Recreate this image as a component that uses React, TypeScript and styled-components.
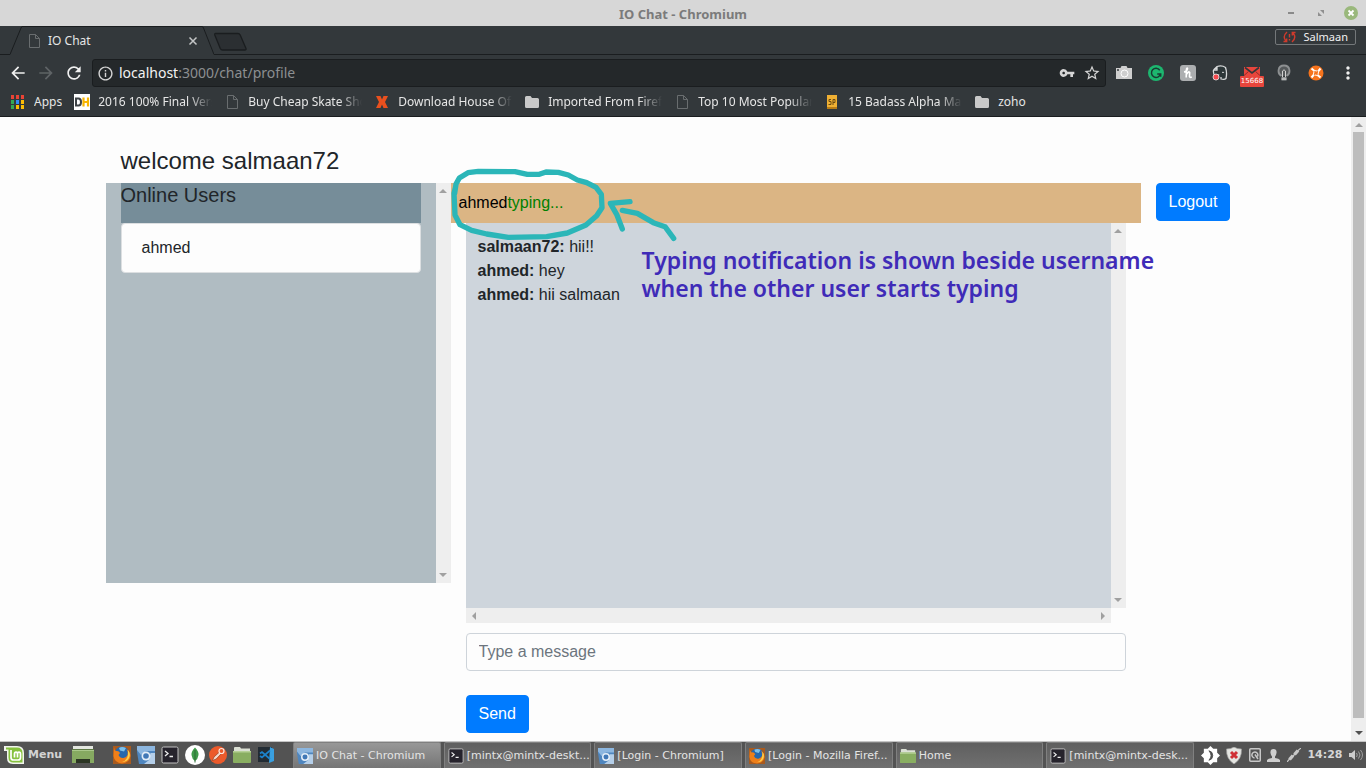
import React from "react";
import styled, { createGlobalStyle, css } from "styled-components";
import {
  MdArrowBack,
  MdArrowForward,
  MdRefresh,
  MdInfoOutline,
  MdVpnKey,
  MdStarBorder,
  MdMoreVert,
} from "react-icons/md";

const uiFont = '"Noto Sans", sans-serif';
const pageFont = '"Liberation Sans", Arial, sans-serif';
const panelFont = '"DejaVu Sans", sans-serif';

const GlobalStyle = createGlobalStyle`
  *, *::before, *::after { box-sizing: border-box; }
  body { margin: 0; background: #33383b; font-family: ${uiFont}; }
  button { border: 0; background: none; padding: 0; font: inherit; color: inherit; cursor: pointer; }
  a { color: inherit; text-decoration: none; }
  svg { display: block; flex: none; }
`;

const Desktop = styled.div`
  display: flex;
  flex-direction: column;
  min-height: 100vh;
`;

/* ---------- window title ---------- */

const TitleBar = styled.header`
  display: grid;
  grid-template-columns: 1fr auto 1fr;
  align-items: center;
  height: 26px;
  background: #d7d7d7;
`;

const WindowTitle = styled.div`
  grid-column: 2;
  padding-top: 2px;
  font-size: 13px;
  line-height: 18px;
  font-weight: 700;
  color: #7b7b7b;
`;

const WindowControls = styled.div`
  display: flex;
  justify-content: flex-end;
  gap: 16px;
  padding-right: 8px;
`;

/* ---------- tab strip ---------- */

const chromeLine = "#1a1d1f";

const TabStrip = styled.nav`
  display: flex;
  height: 29px;
  background: #33383b;
`;

const StripLead = styled.div`
  width: 10px;
  border-bottom: 1px solid ${chromeLine};
`;

const Tab = styled.div`
  display: flex;
  align-items: center;
  width: 180px;
  padding: 0 4px;
  border-top: 1px solid ${chromeLine};
  font-size: 12px;
  line-height: 16px;
  color: #e6e6e6;
`;

const TabLabel = styled.span`
  flex: 1;
  padding-left: 6px;
`;

const StripRest = styled.div`
  display: flex;
  flex: 1;
  align-items: flex-start;
  justify-content: space-between;
  border-bottom: 1px solid ${chromeLine};
  padding-right: 10px;
`;

const NewTabButton = styled.button`
  padding-top: 6px;
`;

const ProfileButton = styled.button`
  display: flex;
  align-items: center;
  gap: 8px;
  height: 16px;
  padding: 0 7px;
  margin-top: 3px;
  border: 1px solid #74787a;
  border-radius: 2px;
  font-size: 11px;
  line-height: 14px;
  color: #f2f2f2;
`;

/* ---------- toolbar ---------- */

const Toolbar = styled.div`
  display: flex;
  align-items: center;
  padding: 4px 2px 0 4px;
  background: #33383b;
`;

const NavButton = styled.button<{ $dim?: boolean }>`
  display: grid;
  place-items: center;
  width: 28px;
  height: 28px;
  color: ${(p) => (p.$dim ? "#5f6466" : "#f0f0f0")};
`;

const Omnibox = styled.div`
  display: flex;
  flex: 1;
  align-items: center;
  height: 28px;
  margin: 0 2px 0 4px;
  padding: 0 4px;
  gap: 8px;
  border: 1px solid ${chromeLine};
  border-radius: 3px;
  background: #24282a;
  color: #d5d5d5;
`;

const Address = styled.div`
  flex: 1;
  margin-left: -3px;
  font-size: 14px;
  line-height: 20px;
  color: #8c8f91;
  b {
    font-weight: 400;
    color: #f2f2f2;
  }
`;

const ExtensionButton = styled.button`
  display: grid;
  place-items: center;
  width: 32px;
  height: 28px;
  color: #f0f0f0;
  position: relative;
`;

const MailBadge = styled.span`
  position: absolute;
  left: 4px;
  top: 17px;
  width: 24px;
  height: 11px;
  border-radius: 1px;
  background: #e8453c;
  color: #fff;
  font: 7px/11px ${panelFont};
  text-align: center;
`;

/* ---------- bookmarks ---------- */

const BookmarkBar = styled.nav`
  display: flex;
  gap: 12px;
  height: 30px;
  padding: 1px 10px 0;
  border-bottom: 1px solid ${chromeLine};
  background: #33383b;
`;

const BookmarkLink = styled.a`
  display: flex;
  align-items: center;
  gap: 8px;
  font-size: 12px;
  line-height: 16px;
  color: #e6e6e6;
`;

const BookmarkText = styled.span<{ $clipped?: boolean }>`
  white-space: nowrap;
  overflow: hidden;
  ${(p) =>
    p.$clipped &&
    css`
      width: 114px;
      mask-image: linear-gradient(to right, #000 80%, transparent 100%);
    `}
`;

/* ---------- page ---------- */

const Viewport = styled.div`
  display: flex;
  flex: 1;
  background: #fdfdfd;
  font-family: ${pageFont};
  font-size: 16px;
  line-height: 24px;
  color: #212529;
`;

const Page = styled.main`
  flex: 1;
  padding: 30px 0 8px;
`;

const Container = styled.div`
  width: 100%;
  max-width: 1140px;
  margin: 0 auto;
`;

const Welcome = styled.h4`
  margin: 0 0 8px;
  padding: 0 15px;
  font-size: 24px;
  line-height: 28px;
  font-weight: 400;
`;

const Columns = styled.div`
  display: grid;
  grid-template-columns: 69fr 138fr 21fr;
  align-items: start;
`;

const UsersPanel = styled.section`
  display: flex;
  height: 400px;
  background: #b0bcc2;
`;

const UsersBody = styled.div`
  flex: 1;
  padding: 0 15px;
`;

const UsersHeading = styled.h5`
  height: 40px;
  margin: 0;
  background: #768d99;
  font-size: 20px;
  line-height: 24px;
  font-weight: 400;
`;

const UserItem = styled.button`
  display: block;
  width: 100%;
  padding: 12px 20px;
  border: 1px solid #dcdfe1;
  border-radius: 4px;
  background: #fdfdfd;
  text-align: left;
`;

const ChatColumn = styled.section`
  position: relative;
`;

const ChatHeader = styled.div`
  height: 40px;
  padding: 8px;
  background: #dbb584;
  color: #000;
`;

const Typing = styled.span`
  color: #008000;
`;

const ChatBody = styled.div`
  padding: 0 15px;
`;

const MessageArea = styled.div`
  display: grid;
  grid-template: 1fr 15px / 1fr 15px;
  height: 400px;
  margin-bottom: 10px;
`;

const Messages = styled.div`
  padding: 12px;
  background: #ced5dc;
`;

const MessageInput = styled.input`
  display: block;
  width: 100%;
  height: 38px;
  margin-bottom: 24px;
  padding: 6px 12px;
  border: 1px solid #ced4da;
  border-radius: 4px;
  background: #fdfdfd;
  font: 16px/24px ${pageFont};
  color: #495057;
  &::placeholder {
    color: #6c757d;
    opacity: 1;
  }
`;

const PrimaryButton = styled.button`
  height: 38px;
  padding: 6px 12px;
  border: 1px solid #007bff;
  border-radius: 4px;
  background: #007bff;
  color: #fff;
`;

const LogoutColumn = styled.div`
  padding: 0 15px;
`;

/* hand-drawn notes laid over the chat */

const MarkerDrawing = styled.svg`
  position: absolute;
  left: -11px;
  top: -23px;
  pointer-events: none;
`;

const Note = styled.div`
  position: absolute;
  left: 191px;
  top: 63px;
  font: 650 23px/28px ${uiFont};
  color: #3f2bb8;
  white-space: nowrap;
  pointer-events: none;
`;

/* ---------- scrollbars ---------- */

const ScrollTrack = styled.div<{ $horizontal?: boolean }>`
  display: flex;
  flex-direction: ${(p) => (p.$horizontal ? "row" : "column")};
  justify-content: space-between;
  align-items: center;
  flex: none;
  ${(p) => (p.$horizontal ? "height: 15px; padding: 0 4px;" : "width: 15px; padding: 4px 0;")}
  background: #eee;
`;

const ScrollThumb = styled.div`
  flex: 1;
  width: 11px;
  margin: 3px 0 11px;
  background: #bdbdbd;
`;

const arrowPaths = {
  up: "M0 6 4 2l4 4z",
  down: "M0 2h8L4 6z",
  left: "M6 0v8L2 4z",
  right: "M2 0v8l4-4z",
};

function Arrow({ dir, dark }: { dir: keyof typeof arrowPaths; dark?: boolean }) {
  return (
    <svg width="8" height="8" viewBox="0 0 8 8" aria-hidden="true">
      <path d={arrowPaths[dir]} fill={dark ? "#505050" : "#a0a0a0"} />
    </svg>
  );
}

/* ---------- taskbar ---------- */

const Taskbar = styled.footer`
  display: flex;
  align-items: center;
  height: 27px;
  border-top: 1px solid #c4c4c4;
  background: #535353;
  font: 11px/16px ${panelFont};
  color: #e4e4e4;
`;

const MenuButton = styled.button`
  display: flex;
  align-items: center;
  gap: 4px;
  width: 72px;
  padding-left: 4px;
  font-weight: 700;
  color: #d3d3d3;
`;

const LauncherButton = styled.button<{ $wide?: boolean }>`
  display: grid;
  place-items: center;
  width: ${(p) => (p.$wide ? 22 : 18)}px;
  height: 20px;
`;

const Launchers = styled.div`
  display: flex;
  gap: 6px;
  width: 180px;
  margin-left: 19px;
`;

const TaskList = styled.div`
  display: flex;
  flex: 1;
  gap: 3px;
  align-self: stretch;
`;

const Task = styled.button<{ $active?: boolean }>`
  display: flex;
  flex: 1 1 0;
  min-width: 0;
  align-items: center;
  gap: 3px;
  padding: 0 3px;
  border: 1px solid #808080;
  border-bottom: 0;
  border-radius: 2px 2px 0 0;
  background: ${(p) =>
    p.$active ? "linear-gradient(#989898, #757575)" : "linear-gradient(#5f5f5f, #707070)"};
  white-space: nowrap;
  svg {
    width: 16px;
    height: 16px;
  }
`;

const Tray = styled.div`
  display: flex;
  align-items: center;
  justify-content: space-between;
  width: 172px;
  padding: 0 3px 0 7px;
`;

const Clock = styled.time`
  font-weight: 700;
  color: #d6d6d6;
`;

/* ---------- icons ---------- */

function PageIcon() {
  return (
    <svg width="16" height="16" viewBox="0 0 16 16" fill="none" stroke="#696d6f">
      <path d="M3.5 1.5h6l4 4v9h-10zM9.500 1.500v4h4" />
    </svg>
  );
}

function BookmarkFolder() {
  return (
    <svg width="16" height="16" viewBox="0 0 16 16" fill="#c9c9c9">
      <path d="M1 3.500Q1 2 2.500 2H6.500L8 4h5.500Q15 4 15 5.500v7q0 1.500-1.500 1.500h-11Q1 14 1 12.500z" />
    </svg>
  );
}

function AppsIcon() {
  const colors = ["#ea4335", "#ea4335", "#ea4335", "#34a853", "#2f8af5", "#fbbc05", "#34a853", "#fbbc05", "#fbbc05"];
  return (
    <svg width="16" height="16" viewBox="0 0 16 16">
      {colors.map((c, i) => (
        <rect key={i} x={1 + (i % 3) * 5} y={1 + Math.floor(i / 3) * 5} width="3" height="4" fill={c} />
      ))}
    </svg>
  );
}

function DhIcon() {
  return (
    <svg width="16" height="16" viewBox="0 0 16 16">
      <rect width="16" height="16" fill="#fff" />
      <path d="M2 4.500h2.500q2.500 0 2.500 3.500t-2.500 3.500H2z" fill="none" stroke="#3e4347" strokeWidth="2" />
      <path d="M9.500 3.500v9M14 3.500v9M9.500 8H14" stroke="#f8b500" strokeWidth="2.200" />
    </svg>
  );
}

function XIcon() {
  return (
    <svg width="16" height="16" viewBox="0 0 16 16">
      <path d="M2 2h4.500L8 5.500 9.500 2H14l-3 6 3 6H9.500L8 10.500 6.500 14H2l3-6z" fill="#e9501e" />
    </svg>
  );
}

function SpIcon() {
  return (
    <svg width="16" height="16" viewBox="0 0 16 16">
      <path d="M3 1h10v14H3z" fill="#f0b033" />
      <path d="M3 13h10v2H3z" fill="#b97c15" />
      <path d="M7 5.500H5v2h2v3H4.500M9 11V5.500h2v3H9" fill="none" stroke="#6b4a12" />
    </svg>
  );
}

function CameraIcon() {
  return (
    <svg width="16" height="14" viewBox="0 0 16 14">
      <path d="M0 2h4.500l1-2h5l1 2H16v11H0z" fill="#cfcfcf" />
      <circle cx="8.500" cy="7.500" r="3.500" fill="none" stroke="#fff" />
      <circle cx="2" cy="4" r="1" fill="#33383b" />
    </svg>
  );
}

function GrammarIcon() {
  return (
    <svg width="16" height="16" viewBox="0 0 16 16">
      <circle cx="8" cy="8" r="8" fill="#1db66f" />
      <path d="M11.800 5.200A4.600 4.600 0 1 0 12.500 9H9.200M12.700 8.500v3.200" fill="none" stroke="#193a32" strokeWidth="1.500" />
    </svg>
  );
}

function HoneyIcon() {
  return (
    <svg width="16" height="16" viewBox="0 0 16 16">
      <rect width="16" height="16" rx="3" fill="#acaeb0" />
      <path d="M4 7q3-.5 3.500-3.500Q7 2.500 6.500 4l-.3 8.500M6.300 9.500Q9 5.500 9.700 7.500l-.2 4q.5 1.500 2.300.3" fill="none" stroke="#fff" strokeWidth="1.600" />
    </svg>
  );
}

function EvernoteIcon() {
  return (
    <svg width="16" height="16" viewBox="0 0 16 16">
      <path d="M1.500 5 5 1.500Q10 0 13.500 2.500q1.800 5 .5 11-1.500 1.500-5 .5L9 12M1.500 5Q1 9 3 10.500q3 1 4-1M1.500 5H5V1.500" fill="#2c3638" stroke="#d7d9da" strokeWidth="1.300" />
      <path d="M10 7.500q1.500-1 2 .5" stroke="#d7d9da" fill="none" />
      <circle cx="4" cy="12" r="3" fill="#f34a4f" stroke="#eee" strokeWidth=".8" />
    </svg>
  );
}

function MailIcon() {
  return (
    <svg width="16" height="16" viewBox="0 0 16 16">
      <path d="M0 2h16v11H0z" fill="#e8453c" />
      <path d="M1 2.500l7 5.500 7-5.500" fill="none" stroke="#33383b" strokeWidth="1.600" />
      <path d="M0 10.500l4.500-4M16 10.500l-4.500-4" fill="none" stroke="#8f2e2a" />
    </svg>
  );
}

function LampIcon() {
  return (
    <svg width="14" height="18" viewBox="0 0 14 18" fill="none">
      <path d="M4.500 12C0 9.500.5 1.500 7 1.500s7 8 2.500 10.500" fill="#55595b" stroke="#8d9092" strokeWidth="1.800" />
      <path d="M5.500 14V7q1.500-2.500 3 0v7" stroke="#d0d0d0" />
      <path d="M4.500 13h5v3.500h-5z" fill="#8f9294" />
      <path d="M4.500 15h5" stroke="#ddd" />
    </svg>
  );
}

function OrangeIcon() {
  return (
    <svg width="16" height="16" viewBox="0 0 16 16">
      <circle cx="8" cy="8" r="7.500" fill="#f6731c" />
      <path d="M3.500 3.500l3 2.500M12.500 3.500l-2.500 3M12.500 12.500l-3-2.500M3.500 12.500l2.500-3" stroke="#fff" strokeWidth="2" />
      <path d="M6.500 5.500l2.500.5M10.500 7l-.5 2.500M9.500 10.500l-2.500-.5M5.500 9l.5-2.500" stroke="#fff" strokeWidth="1" />
    </svg>
  );
}

function MintIcon() {
  return (
    <svg width="20" height="20" viewBox="0 0 20 20">
      <path d="M0 1h13q7 0 7 7v11H9q-6 0-6-6V6H0z" fill="#f2f5ee" />
      <path d="M2 2.500h11q5.500 0 5.500 5.500v9.500H9.500q-5 0-5-5v-8H2z" fill="#86c13e" />
      <path d="M7 5v7.500q0 2.500 2.500 2.500h4.500q2.500 0 2.500-2.500V9q0-1.800-1.500-1.800T13.500 9v3.500M13.500 9q0-1.800-1.500-1.800T10.500 9v3.500" fill="none" stroke="#fff" strokeWidth="1.700" />
    </svg>
  );
}

function ShowDesktopIcon() {
  return (
    <svg width="22" height="18" viewBox="0 0 22 18">
      <path d="M1 0h20v3H1z" fill="#e3e6df" />
      <path d="M0 3h22v14H0z" fill="#86a961" />
      <path d="M0 3h22v1H0z" fill="#5c7743" />
      <path d="M0 4h22v1H0z" fill="#a9c78a" />
      <path d="M4 13h14v4H4z" fill="#2b3523" />
    </svg>
  );
}

function FirefoxIcon() {
  return (
    <svg width="18" height="18" viewBox="0 0 18 18">
      <path d="M0 0h18v18H0z" fill="#a85a1e" />
      <circle cx="9" cy="8" r="7.500" fill="#2668ad" />
      <path d="M6 2q3-2 7 0l-2 3.500-4-1z" fill="#7cc0ea" />
      <path d="M1 1q0 3 2 4 3-.5 4 2L5.500 9q1.500 3.500 5 3 3-.5 4-3 1-3-1-6 4 2.500 4 7-1 7-8.500 7.500Q1.500 17 .5 10z" fill="#ee7f1a" />
      <path d="M15 4q3 4 1 8-2 4-7 4 7-2 6-12z" fill="#fcd04a" />
    </svg>
  );
}

function ChromiumIcon() {
  return (
    <svg width="18" height="18" viewBox="0 0 18 18">
      <path d="M0 0h18v18H2L0 6z" fill="#4f86bf" />
      <path d="M0 0h18v5H9L4 9 0 4z" fill="#8cb6df" />
      <path d="M13.500 7H18v11H7l5-4z" fill="#b5cfe9" />
      <circle cx="9" cy="10" r="4.500" fill="#e4eef8" />
      <circle cx="9" cy="10" r="2.800" fill="#4178b6" />
    </svg>
  );
}

function TerminalIcon() {
  return (
    <svg width="18" height="18" viewBox="0 0 18 18">
      <rect x="1" y="1" width="16" height="16" rx="1.500" fill="#26232c" stroke="#c2c2c2" />
      <path d="M4 5l3 2.500L4 10M8.500 10.500H12" fill="none" stroke="#eee" strokeWidth="1.300" />
    </svg>
  );
}

function MongoIcon() {
  return (
    <svg width="20" height="20" viewBox="0 0 20 20">
      <circle cx="10" cy="10" r="10" fill="#fff" />
      <path d="M10 2.500q4 4 3.500 7.500-.5 4-3.500 6-3-2-3.500-6Q6 6.500 10 2.500z" fill="#3f9a49" />
      <path d="M10 5v12.500" stroke="#2c6b35" />
    </svg>
  );
}

function PostmanIcon() {
  return (
    <svg width="18" height="18" viewBox="0 0 18 18">
      <circle cx="9" cy="9" r="9" fill="#ec5a2b" />
      <path d="M3.500 14.500 5 11l5.500-5 1.700 1.700-5 5.300z" fill="#f6d9cc" stroke="#843115" strokeWidth=".6" />
      <circle cx="12.500" cy="5" r="2.500" fill="#ec5a2b" stroke="#fbe9e1" strokeWidth="1.200" />
    </svg>
  );
}

function FolderIcon() {
  return (
    <svg width="18" height="18" viewBox="0 0 18 18">
      <path d="M1 2q0-1 1-1h5l1 1.500h9v5H1z" fill="#dbe0d4" />
      <path d="M0 5h18v11q0 1-1 1H1q-1 0-1-1z" fill="#89ae61" />
      <path d="M0 5h18v1.500H0z" fill="#b5d096" />
    </svg>
  );
}

function CodeIcon() {
  return (
    <svg width="18" height="18" viewBox="0 0 18 18">
      <path d="M1 1h14v15H1z" fill="#222b33" />
      <path d="M13 1l4 2v12l-5 2z" fill="#3aa0e0" />
      <path d="M13 4.500 5 11.500 3 10M13 13 5 6 3 7.500" fill="none" stroke="#1c82cc" strokeWidth="1.700" />
    </svg>
  );
}

function BrightnessIcon() {
  return (
    <svg width="19" height="19" viewBox="0 0 18 18">
      <path d="M9 0l2.600 2.700h3.700v3.700L18 9l-2.700 2.600v3.700h-3.700L9 18l-2.600-2.700H2.700v-3.700L0 9l2.700-2.600V2.700h3.700z" fill="#fff" />
      <path d="M7.500 4.500a4.600 4.600 0 0 1 0 9q4-4.500 0-9z" fill="#4d4d4d" stroke="#4d4d4d" strokeWidth=".8" />
    </svg>
  );
}

function ShieldIcon() {
  return (
    <svg width="16" height="17" viewBox="0 0 16 17">
      <path d="M8 0q3 2 7.500 2Q16 12 8 17 0 12 .5 2 5 2 8 0z" fill="#e4e5e1" stroke="#9b9b9b" strokeWidth=".7" />
      <path d="M5 5l6 6M11 5l-6 6" stroke="#cf3035" strokeWidth="3" />
    </svg>
  );
}

function DiskIcon() {
  return (
    <svg width="12" height="14" viewBox="0 0 12 14" fill="none" stroke="#c8c8c8">
      <rect x=".75" y=".75" width="10.500" height="12.500" rx="1" strokeWidth="1.500" />
      <path d="M8.500 8.500a3 3 0 1 0-3 1.500M6 6.500l3 4.500" strokeWidth="1.500" />
    </svg>
  );
}

function PersonIcon() {
  return (
    <svg width="13" height="13" viewBox="0 0 13 13" fill="#cfcfcf">
      <path d="M6.500 0Q10 0 9.500 4 9 7 8 7.500V9q4 .5 5 2v2H0v-2q1-1.500 5-2V7.500Q4 7 3.500 4 3 0 6.500 0z" />
    </svg>
  );
}

function PlugIcon() {
  return (
    <svg width="14" height="14" viewBox="0 0 14 14" stroke="#c8c8c8" fill="none">
      <path d="M0 14l3-3.500M14 0l-3.500 3" strokeWidth="1.200" />
      <path d="M2.500 11.500l3.500-4M7.500 6.500l3.500-4" strokeWidth="3.400" />
      <path d="M5 9l4-4" strokeWidth="1.500" />
    </svg>
  );
}

function SoundIcon() {
  return (
    <svg width="14" height="14" viewBox="0 0 14 14">
      <path d="M0 5h2.500L6 2v10L2.500 9H0z" fill="#ccc" />
      <path d="M7.500 5q1.500 2 0 4M9.500 3.500q3 3.500 0 7M11.500 2q4 5 0 10" fill="none" stroke="#a0a0a0" />
    </svg>
  );
}

const bookmarks = [
  { label: "2016 100% Final Version", icon: <DhIcon /> },
  { label: "Buy Cheap Skate Shoes", icon: <PageIcon /> },
  { label: "Download House Of Cards", icon: <XIcon /> },
  { label: "Imported From Firefox", icon: <BookmarkFolder /> },
  { label: "Top 10 Most Popular", icon: <PageIcon /> },
  { label: "15 Badass Alpha Male", icon: <SpIcon /> },
];

const extensions = [
  { name: "Screenshot", icon: <CameraIcon /> },
  { name: "Grammar", icon: <GrammarIcon /> },
  { name: "Coupons", icon: <HoneyIcon /> },
  { name: "Clipper", icon: <EvernoteIcon /> },
  { name: "Mail", icon: <MailIcon />, badge: "15668" },
  { name: "Lamp", icon: <LampIcon /> },
  { name: "Tools", icon: <OrangeIcon /> },
];

const messages = [
  { from: "salmaan72", text: "hii!!" },
  { from: "ahmed", text: "hey" },
  { from: "ahmed", text: "hii salmaan" },
];

const tasks = [
  { label: "IO Chat - Chromium", icon: <ChromiumIcon />, active: true },
  { label: "[mintx@mintx-deskt...", icon: <TerminalIcon /> },
  { label: "[Login - Chromium]", icon: <ChromiumIcon /> },
  { label: "[Login - Mozilla Firef...", icon: <FirefoxIcon /> },
  { label: "Home", icon: <FolderIcon /> },
  { label: "[mintx@mintx-desk...", icon: <TerminalIcon /> },
];

const launchers = [
  { name: "Firefox", icon: <FirefoxIcon /> },
  { name: "Chromium", icon: <ChromiumIcon /> },
  { name: "Terminal", icon: <TerminalIcon /> },
  { name: "MongoDB", icon: <MongoIcon /> },
  { name: "Postman", icon: <PostmanIcon /> },
  { name: "Files", icon: <FolderIcon /> },
  { name: "Code", icon: <CodeIcon /> },
];

function BrowserChrome() {
  return (
    <>
      <TitleBar>
        <WindowTitle>IO Chat - Chromium</WindowTitle>
        <WindowControls>
          <button aria-label="Minimize">
            <svg width="14" height="14" viewBox="0 0 14 14">
              <path d="M4 6h6v2H4z" fill="#8a8a8a" />
            </svg>
          </button>
          <button aria-label="Maximize">
            <svg width="14" height="14" viewBox="0 0 14 14" fill="#8f8f8f">
              <path d="M6 4h4v4zM4 6v4h4z" />
            </svg>
          </button>
          <button aria-label="Close">
            <svg width="14" height="14" viewBox="0 0 14 14">
              <circle cx="7" cy="7" r="7" fill="#9ab87c" />
              <path d="M4.500 4.500l5 5M9.500 4.500l-5 5" stroke="#fff" strokeWidth="1.800" />
            </svg>
          </button>
        </WindowControls>
      </TitleBar>

      <TabStrip>
        <StripLead />
        <svg width="12" height="29" viewBox="0 0 12 29" fill="none" stroke={chromeLine}>
          <path d="M0 28.500 11 2Q11.500.5 12 .5" />
        </svg>
        <Tab>
          <PageIcon />
          <TabLabel>IO Chat</TabLabel>
          <button aria-label="Close tab">
            <svg width="10" height="10" viewBox="0 0 10 10" stroke="#c4c6c7" strokeWidth="1.500">
              <path d="M1.500 1.500l7 7M8.500 1.500l-7 7" />
            </svg>
          </button>
        </Tab>
        <svg width="12" height="29" viewBox="0 0 12 29" fill="none" stroke={chromeLine}>
          <path d="M0 .5Q1 .5 1.500 2L12 28.500" />
        </svg>
        <StripRest>
          <NewTabButton aria-label="New tab">
            <svg width="34" height="20" viewBox="0 0 34 20">
              <path d="M1.500 1.500h22.500q1.500 0 2.200 1.500l5.800 13.500q.5 1.500-1.200 1.500H8.500q-1.500 0-2.200-1.500L.8 3Q.5 1.500 1.500 1.500z" fill="#2b2f32" stroke={chromeLine} strokeWidth="1.300" />
            </svg>
          </NewTabButton>
          <ProfileButton>
            <svg width="13" height="12" viewBox="0 0 13 12" fill="none" stroke="#cf3a2c" strokeWidth="1.400">
              <path d="M4 1Q-1 5.500 3 10M.5 10.500h3.200V7.500M9 11q5-4.500 1-9M12.500 1.500H9.300v3M6.500 3v3.500M6.500 8v1.500" />
            </svg>
            Salmaan
          </ProfileButton>
        </StripRest>
      </TabStrip>

      <Toolbar>
        <NavButton aria-label="Back"><MdArrowBack size={20} /></NavButton>
        <NavButton aria-label="Forward" $dim><MdArrowForward size={20} /></NavButton>
        <NavButton aria-label="Reload"><MdRefresh size={20} /></NavButton>
        <Omnibox>
          <MdInfoOutline size={17} />
          <Address><b>localhost</b>:3000/chat/profile</Address>
          <MdVpnKey size={16} />
          <MdStarBorder size={18} />
        </Omnibox>
        {extensions.map((e) => (
          <ExtensionButton key={e.name} aria-label={e.name}>
            {e.icon}
            {e.badge && <MailBadge>{e.badge}</MailBadge>}
          </ExtensionButton>
        ))}
        <ExtensionButton aria-label="Browser menu"><MdMoreVert size={20} /></ExtensionButton>
      </Toolbar>

      <BookmarkBar>
        <BookmarkLink href="#apps"><AppsIcon /><BookmarkText>Apps</BookmarkText></BookmarkLink>
        {bookmarks.map((b) => (
          <BookmarkLink key={b.label} href="#bookmark">
            {b.icon}
            <BookmarkText $clipped>{b.label}</BookmarkText>
          </BookmarkLink>
        ))}
        <BookmarkLink href="#zoho"><BookmarkFolder /><BookmarkText>zoho</BookmarkText></BookmarkLink>
      </BookmarkBar>
    </>
  );
}

function ChatPage() {
  return (
    <Viewport>
      <Page>
        <Container>
          <Welcome>welcome salmaan72</Welcome>
          <Columns>
            <UsersPanel>
              <UsersBody>
                <UsersHeading>Online Users</UsersHeading>
                <UserItem>ahmed</UserItem>
              </UsersBody>
              <ScrollTrack><Arrow dir="up" /><Arrow dir="down" /></ScrollTrack>
            </UsersPanel>

            <ChatColumn>
              <ChatHeader>ahmed<Typing>typing...</Typing></ChatHeader>
              <ChatBody>
                <MessageArea>
                  <Messages>
                    {messages.map((m, i) => (
                      <div key={i}><b>{m.from}:</b> {m.text}</div>
                    ))}
                  </Messages>
                  <ScrollTrack><Arrow dir="up" /><Arrow dir="down" /></ScrollTrack>
                  <ScrollTrack $horizontal><Arrow dir="left" /><Arrow dir="right" /></ScrollTrack>
                </MessageArea>
                <MessageInput type="text" aria-label="Message" placeholder="Type a message" />
                <PrimaryButton>Send</PrimaryButton>
              </ChatBody>
              <MarkerDrawing
                width="260"
                height="150"
                viewBox="0 0 780 450"
                fill="none"
                stroke="#2bb6b8"
                strokeWidth="16"
                strokeLinecap="round"
                strokeLinejoin="round"
              >
                <path d="M44 100 48 72 58 54 84 38 115 34 225 35 262 43H298L318 36 355 37 385 45 412 60 440 68 468 82 484 103 486 143 470 167 438 195 382 219 320 230 205 232 140 222 95 211 60 194 45 165 42 100 47 80" />
                <path d="M570 125 511 130 530 163 547 207M547 151 592 160 640 188 675 200 701 235" />
              </MarkerDrawing>
              <Note>
                <div>Typing notification is shown beside username</div>
                <div>when the other user starts typing</div>
              </Note>
            </ChatColumn>

            <LogoutColumn>
              <PrimaryButton>Logout</PrimaryButton>
            </LogoutColumn>
          </Columns>
        </Container>
      </Page>
      <ScrollTrack><Arrow dir="up" /><ScrollThumb /><Arrow dir="down" dark /></ScrollTrack>
    </Viewport>
  );
}

export default function App() {
  return (
    <Desktop>
      <GlobalStyle />
      <BrowserChrome />
      <ChatPage />
      <Taskbar>
        <MenuButton><MintIcon />Menu</MenuButton>
        <LauncherButton $wide aria-label="Show desktop"><ShowDesktopIcon /></LauncherButton>
        <Launchers>
          {launchers.map((l) => (
            <LauncherButton key={l.name} aria-label={l.name}>{l.icon}</LauncherButton>
          ))}
        </Launchers>
        <TaskList>
          {tasks.map((t) => (
            <Task key={t.label} $active={t.active}>{t.icon}<span>{t.label}</span></Task>
          ))}
        </TaskList>
        <Tray>
          <BrightnessIcon />
          <ShieldIcon />
          <DiskIcon />
          <PersonIcon />
          <PlugIcon />
          <Clock>14:28</Clock>
          <SoundIcon />
        </Tray>
      </Taskbar>
    </Desktop>
  );
}
